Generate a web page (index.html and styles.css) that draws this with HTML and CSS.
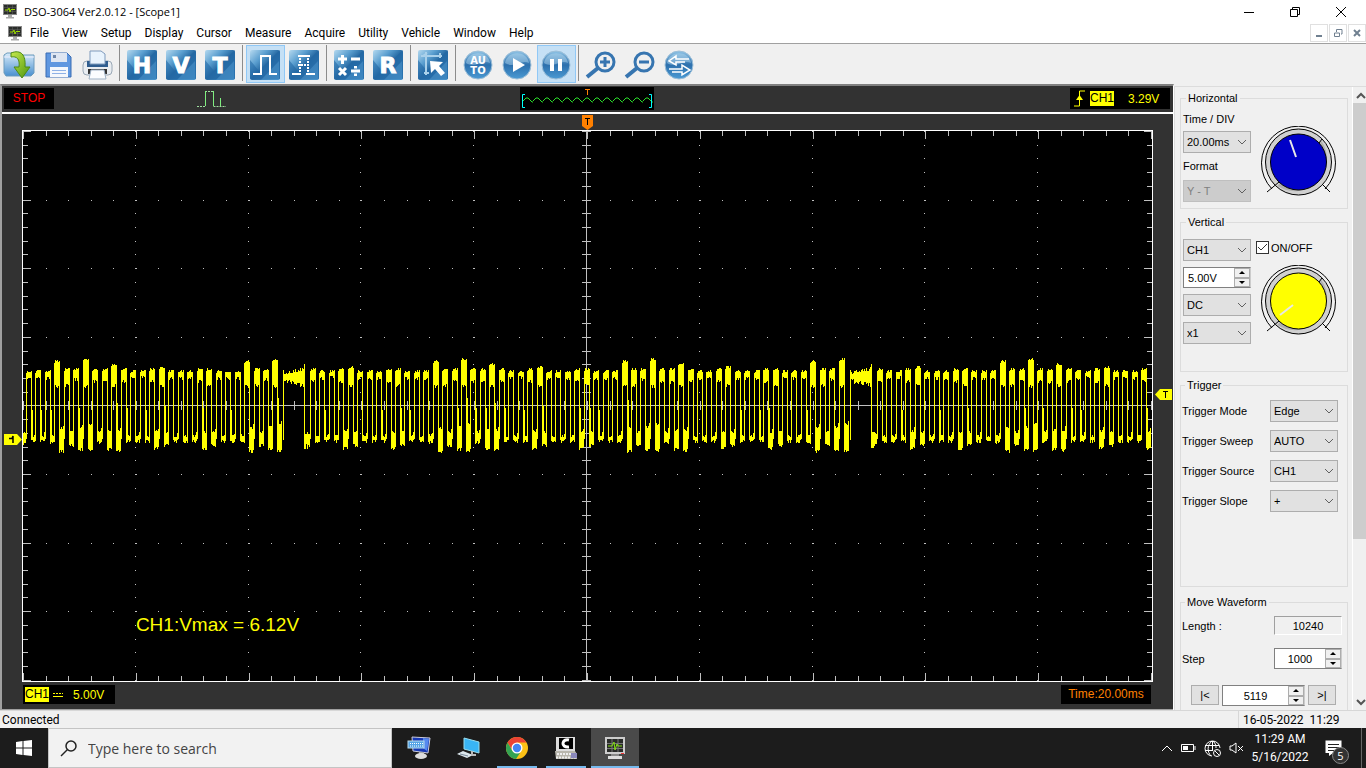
FILE: index.html
```html
<!DOCTYPE html>
<html lang="en">
<head>
    <meta charset="UTF-8">
    <meta name="viewport" content="width=device-width, initial-scale=1.0">
    <title>DSO-3064 Ver2.0.12 - [Scope1]</title>
    <link rel="stylesheet" href="styles.css">
</head>
<body>
    <!-- Shared gradients and icons -->
    <svg class="defs" aria-hidden="true">
        <defs>
            <linearGradient id="blue" x1="0" y1="0" x2="1" y2="1">
                <stop offset="0" stop-color="#b5d9ef"/>
                <stop offset="0.3" stop-color="#5b9fd0"/>
                <stop offset="0.5" stop-color="#2a6da6"/>
                <stop offset="1" stop-color="#3f8cc6"/>
            </linearGradient>
            <linearGradient id="blueDown" x1="0" y1="0" x2="0" y2="1">
                <stop offset="0" stop-color="#8fc4e6"/>
                <stop offset="0.5" stop-color="#2d70ad"/>
                <stop offset="1" stop-color="#4b9ad3"/>
            </linearGradient>
            <linearGradient id="folder" x1="0" y1="0" x2="0" y2="1">
                <stop offset="0" stop-color="#d9ecfa"/>
                <stop offset="1" stop-color="#4a90cf"/>
            </linearGradient>
            <linearGradient id="green" x1="0" y1="0" x2="1" y2="1">
                <stop offset="0" stop-color="#c6e94c"/>
                <stop offset="1" stop-color="#4d9610"/>
            </linearGradient>
        </defs>
        <symbol id="tile" viewBox="0 0 32 32">
            <rect x="1" y="1" width="30" height="30" rx="2" fill="url(#blue)"/>
            <path d="M1 11 L10 22 L31 1 V30 H1 Z" fill="#1f65a2" opacity="0.55"/>
            <path d="M12 31 L30 12 V31 Z" fill="#5aa3d8" opacity="0.4"/>
        </symbol>
        <symbol id="ball" viewBox="0 0 32 32">
            <circle cx="16" cy="16" r="14" fill="url(#blueDown)" stroke="#9dbfd8"/>
            <path d="M4 14 C6 1 26 1 28 14 C20 10 14 20 4 14 Z" fill="#b5daf0" opacity="0.45"/>
        </symbol>
        <symbol id="monitor" viewBox="0 0 14 15">
            <rect x="0.5" y="0.5" width="13" height="10" fill="#2b2e2b" stroke="#888"/>
            <path d="M1 3.5 H13 M1 7.5 H13 M4.5 1 V10 M9.5 1 V10" stroke="#626262" stroke-width="0.5"/>
            <path d="M2 6 H5 L6 4 L7 8 L8 5.5 H12" fill="none" stroke="#9ddb00"/>
            <path d="M5 11 H9 V13 H11 V14.500 H3 V13 H5 Z" fill="#aaa"/>
        </symbol>
    </svg>

    <header class="titlebar">
        <svg class="app-icon"><use href="#monitor"/></svg>
        <h1>DSO-3064 Ver2.0.12 - [Scope1]</h1>
        <div class="window-buttons">
            <button aria-label="Minimize"><svg width="12" height="12" viewBox="0 0 12 12"><path d="M1 6.500 H11"/></svg></button>
            <button aria-label="Restore"><svg width="12" height="12" viewBox="0 0 12 12"><path d="M1.500 3.500 H8.500 V10.500 H1.500 Z M3.500 3 V1.500 H10.500 V8.500 H9"/></svg></button>
            <button aria-label="Close"><svg width="12" height="12" viewBox="0 0 12 12"><path d="M1 1 L11 11 M11 1 L1 11"/></svg></button>
        </div>
    </header>

    <nav class="menubar">
        <svg class="app-icon"><use href="#monitor"/></svg>
        <button>File</button>
        <button>View</button>
        <button>Setup</button>
        <button>Display</button>
        <button>Cursor</button>
        <button>Measure</button>
        <button>Acquire</button>
        <button>Utility</button>
        <button>Vehicle</button>
        <button>Window</button>
        <button>Help</button>
        <div class="child-buttons">
            <button aria-label="Minimize child"><svg width="10" height="10" viewBox="0 0 10 10"><path d="M2 8 H8"/></svg></button>
            <button aria-label="Restore child"><svg width="10" height="10" viewBox="0 0 10 10"><path d="M1.500 5 H6.500 V8.500 H1.500 Z M3.500 4 V1.500 H9 V6 H8" class="thin"/></svg></button>
            <button aria-label="Close child"><svg width="10" height="10" viewBox="0 0 10 10"><path d="M2 2 L8 8 M8 2 L2 8"/></svg></button>
        </div>
    </nav>

    <div class="toolbar">
        <button aria-label="Open">
            <svg viewBox="0 0 32 32"><path d="M1 6 L4 4 H12 L14 6 H31 V24 L28 27 H3 L1 24 Z" fill="url(#folder)" stroke="#6d9bbd"/><path d="M1 8 H31" stroke="#eef"/><path d="M8 4 C18 0 23 6 22 18 H27 L19 29 L11 18 H16 C17 10 14 7 8 8 Z" fill="url(#green)" stroke="#4c8a14"/></svg>
        </button>
        <button aria-label="Save">
            <svg viewBox="0 0 32 32"><path d="M4 4 H25 L29 8 V28 H4 Z" fill="#5f97e0" stroke="#3b6cb3"/><rect x="9" y="4" width="16" height="9" fill="#dfe6f2"/><rect x="11" y="6" width="3" height="3" fill="#7087a8"/><rect x="8" y="18" width="18" height="10" fill="#f4f7fc"/><path d="M10 21.500 H24 M10 24.500 H24" stroke="#8eb1e6"/></svg>
        </button>
        <button aria-label="Print">
            <svg viewBox="0 0 32 32"><rect x="2" y="12" width="29" height="14" rx="4" fill="#e9edf1" stroke="#9aa8b6"/><path d="M6 12 H27 V18 H6 Z" fill="#2f5d8f"/><path d="M9 2 H20 L24 5 V15 H9 Z" fill="#e8f3fd" stroke="#7f9bbd"/><path d="M7 20 H26 V25 H7 Z" fill="#333"/><path d="M10 21 H23 L25 30 H8 Z" fill="#fbfdff" stroke="#9fb2c6"/></svg>
        </button>
        <span class="separator"></span>
        <button aria-label="Horizontal"><svg viewBox="0 0 32 32"><use href="#tile"/><text x="16" y="24" class="letter">H</text></svg></button>
        <button aria-label="Vertical"><svg viewBox="0 0 32 32"><use href="#tile"/><text x="16" y="24" class="letter">V</text></svg></button>
        <button aria-label="Trigger"><svg viewBox="0 0 32 32"><use href="#tile"/><text x="16" y="24" class="letter">T</text></svg></button>
        <span class="separator"></span>
        <button class="checked" aria-label="Pulse"><svg viewBox="0 0 32 32"><use href="#tile"/><path class="line" d="M4 25 H12 V7 H21 V25 H28"/></svg></button>
        <button aria-label="Average"><svg viewBox="0 0 32 32"><use href="#tile"/><path class="line" d="M4 25 H13 M18 25 H27 M10 7 H22"/><path class="line dashed" d="M12 9 V24 M20 9 V24 M10 16 H22"/></svg></button>
        <span class="separator"></span>
        <button aria-label="Math"><svg viewBox="0 0 32 32"><use href="#tile"/><path class="line bold" d="M5 10 H14 M9.500 6 V15 M18 10 H27 M6 19 L13 26 M13 19 L6 26 M18 22 H27 M22.500 17 V19.500 M22.500 24.500 V27"/></svg></button>
        <button aria-label="Reference"><svg viewBox="0 0 32 32"><use href="#tile"/><text x="16" y="24" class="letter">R</text></svg></button>
        <span class="separator"></span>
        <button aria-label="Cursor"><svg viewBox="0 0 32 32"><use href="#tile"/><path d="M4 7 H25 M9 3 V26 M6 7 L10 4 M23 4 V9 M7 24 H12" fill="none" stroke="#a9d0ea" stroke-width="2"/><path d="M13 12 L26 13 L22 17 L28 24 L24 27 L18 20 L14 24 Z" fill="#fff"/></svg></button>
        <span class="separator"></span>
        <button aria-label="Auto set"><svg viewBox="0 0 32 32"><use href="#ball"/><text x="16" y="15" class="auto">AU</text><text x="16" y="25" class="auto">TO</text></svg></button>
        <button aria-label="Start"><svg viewBox="0 0 32 32"><use href="#ball"/><path d="M12 9 L24 16 L12 23 Z" fill="#fff"/></svg></button>
        <button class="checked" aria-label="Stop"><svg viewBox="0 0 32 32"><use href="#ball"/><path d="M10 10 H14 V22 H10 Z M18 10 H22 V22 H18 Z" fill="#fff"/></svg></button>
        <span class="separator"></span>
        <button aria-label="Zoom in"><svg viewBox="0 0 32 32" class="lens"><path d="M2 28 L13 19" class="handle"/><circle cx="20" cy="13" r="9"/><path d="M15 13 H25 M20 8 V18"/></svg></button>
        <button aria-label="Zoom out"><svg viewBox="0 0 32 32" class="lens"><path d="M2 28 L13 19" class="handle"/><circle cx="20" cy="13" r="9"/><path d="M15 13 H25"/></svg></button>
        <button aria-label="Refresh"><svg viewBox="0 0 32 32"><use href="#ball"/><path d="M26 10 H13 V7 L6 12 L13 16 V13 H22 M6 20 H19 V16 L27 21 L19 26 V23 H9" fill="none" stroke="#fff" stroke-width="1.500"/></svg></button>
    </div>

    <main class="workspace">
        <section class="scope">
            <div class="scope-top">
                <div class="scope-state">
                    <span class="stop">STOP</span>
                    <svg width="30" height="18" viewBox="0 0 30 18"><path d="M0 16.500 H8.500 M8 1.500 H17 M16.500 16.500 H29" fill="none" stroke="#9fdf9f" stroke-dasharray="2 1"/><path d="M8.500 16 V1 M16.500 1 V16 M23.500 16 V8" stroke="#7fef7f"/></svg>
                </div>
                <svg class="preview" width="134" height="23" viewBox="0 0 134 23">
                    <rect width="134" height="23"/>
                    <path id="previewWave" fill="none" stroke="#2be02b"/>
                    <path d="M5 7.500 H2.500 V20.500 H5 M129 7.500 H131.500 V20.500 H129" fill="none" stroke="#0ff"/>
                    <path d="M65 2.500 H70 M67.500 2 V8" stroke="#ff8000"/>
                </svg>
                <div class="trigger-info">
                    <svg width="11" height="17" viewBox="0 0 11 17"><path d="M0 16 H5.500 V1 H11" fill="none" stroke="#ff0"/><path d="M5.500 5 L9 10 H2 Z" fill="#ff0"/></svg>
                    <span class="channel">CH1</span>
                    <span>3.29V</span>
                </div>
            </div>
            <div class="scope-screen">
                <div class="top-marker">
                    <svg width="11" height="15" viewBox="0 0 11 15"><path d="M0 0 H11 V11 L5.500 15 L0 11 Z" fill="#ff8000"/><path d="M3 3.500 H8 M5.500 3 V10" stroke="#000"/></svg>
                </div>
                <div class="plot-row">
                    <div class="gutter">
                        <svg class="marker channel-marker" width="18" height="11" viewBox="0 0 18 11"><path d="M0 0 H13 L18 5.500 L13 11 H0 Z" fill="#ff0"/><path d="M5 4.500 H8 L9 2 V9" fill="none" stroke="#000" stroke-width="1.500"/></svg>
                    </div>
                    <div class="plot">
                        <svg id="plot" viewBox="0 0 1129 550" preserveAspectRatio="none">
                            <path id="dots"/>
                            <path id="ticks"/>
                            <path id="wave"/>
                        </svg>
                        <span class="readout">CH1:Vmax = 6.12V</span>
                    </div>
                    <div class="gutter">
                        <svg class="marker level-marker" width="17" height="11" viewBox="0 0 17 11"><path d="M17 0 H5 L0 5.500 L5 11 H17 Z" fill="#ff0"/><path d="M8 2.500 H13 M10.500 2 V9" stroke="#000"/></svg>
                    </div>
                </div>
                <div class="scope-bottom">
                    <div class="channel-info">
                        <span class="channel">CH1</span>
                        <svg width="10" height="6" viewBox="0 0 10 6"><path d="M0 4.500 H10" stroke="#ff0"/><path d="M0 1.500 H10" stroke="#ff0" stroke-dasharray="2 1"/></svg>
                        <span>5.00V</span>
                    </div>
                    <div class="time-info">Time:20.00ms</div>
                </div>
            </div>
        </section>

        <aside class="panel">
            <form class="panel-content">
                <fieldset class="horizontal">
                    <legend>Horizontal</legend>
                    <div class="column">
                        <label for="timeDiv">Time / DIV</label>
                        <select id="timeDiv"><option>20.00ms</option></select>
                        <label for="format">Format</label>
                        <select id="format" disabled><option>Y - T</option></select>
                    </div>
                    <svg class="knob" viewBox="0 0 76 72">
                        <path class="ring" d="M11 63 A37 37 0 1 1 64 63"/>
                        <circle class="rim" cx="37.500" cy="36" r="33"/>
                        <path class="shade" d="M58 16 A29.500 29.500 0 0 1 18 58"/>
                        <circle cx="37.500" cy="36" r="28" fill="#0000c8"/>
                        <path class="pointer" d="M29 14 L35 31"/>
                        <path class="mark" d="M6 66 L18 56 M58 17 L61 13 M62 59 L69 66"/>
                    </svg>
                </fieldset>

                <fieldset class="vertical">
                    <legend>Vertical</legend>
                    <div class="column">
                        <select aria-label="Channel"><option>CH1</option></select>
                        <div class="spin">
                            <input type="text" value="5.00V" aria-label="Volts per division">
                            <button type="button" class="up" aria-label="Increase volts"></button>
                            <button type="button" class="down" aria-label="Decrease volts"></button>
                        </div>
                        <select aria-label="Coupling"><option>DC</option></select>
                        <select aria-label="Probe"><option>x1</option></select>
                    </div>
                    <div class="column knob-column">
                        <label class="check"><input type="checkbox" checked>ON/OFF</label>
                        <svg class="knob" viewBox="0 0 76 72">
                            <path class="ring" d="M11 63 A37 37 0 1 1 64 63"/>
                            <circle class="rim" cx="37.500" cy="36" r="33"/>
                            <path class="shade" d="M58 16 A29.500 29.500 0 0 1 18 58"/>
                            <circle cx="37.500" cy="36" r="28" fill="#ff0"/>
                            <path class="pointer" d="M19 50 L32 40"/>
                            <path class="mark" d="M6 66 L18 56 M58 17 L61 13 M62 59 L69 66"/>
                        </svg>
                    </div>
                </fieldset>

                <fieldset class="trigger">
                    <legend>Trigger</legend>
                    <div class="row"><label for="mode">Trigger Mode</label><select id="mode"><option>Edge</option></select></div>
                    <div class="row"><label for="sweep">Trigger Sweep</label><select id="sweep"><option>AUTO</option></select></div>
                    <div class="row"><label for="source">Trigger Source</label><select id="source"><option>CH1</option></select></div>
                    <div class="row"><label for="slope">Trigger Slope</label><select id="slope"><option>+</option></select></div>
                </fieldset>

                <fieldset class="move">
                    <legend>Move Waveform</legend>
                    <div class="row"><label for="length">Length :</label><input id="length" class="length" type="text" value="10240" readonly></div>
                    <div class="row">
                        <label for="step">Step</label>
                        <div class="spin centered">
                            <input id="step" type="text" value="1000">
                            <button type="button" class="up" aria-label="Increase step"></button>
                            <button type="button" class="down" aria-label="Decrease step"></button>
                        </div>
                    </div>
                    <div class="position">
                        <button type="button" class="jump">|&lt;</button>
                        <div class="spin centered wide">
                            <input type="text" value="5119" aria-label="Position">
                            <button type="button" class="up" aria-label="Increase position"></button>
                            <button type="button" class="down" aria-label="Decrease position"></button>
                        </div>
                        <button type="button" class="jump">&gt;|</button>
                    </div>
                </fieldset>
            </form>
            <div class="scrollbar">
                <svg width="10" height="16" viewBox="0 0 10 16"><path d="M1 11 L5 7 L9 11"/></svg>
                <span class="thumb"></span>
                <svg width="10" height="16" viewBox="0 0 10 16"><path d="M1 6 L5 10 L9 6"/></svg>
            </div>
        </aside>
    </main>

    <div class="statusbar">
        <span>Connected</span>
        <span class="status-date">16-05-2022&nbsp; 11:29</span>
    </div>

    <footer class="taskbar">
        <button class="start" aria-label="Start menu"><svg width="16" height="16" viewBox="0 0 16 16"><path d="M0 2 L6.500 1 V7.500 H0 Z M7.500 1 L16 0 V7.500 H7.500 Z M0 8.500 H6.500 V15 L0 14 Z M7.500 8.500 H16 V16 L7.500 15 Z" fill="#fff"/></svg></button>
        <label class="search">
            <svg width="18" height="18" viewBox="0 0 18 18"><circle cx="11" cy="7" r="5" fill="none" stroke="#222" stroke-width="1.500"/><path d="M7.500 10.500 L1 17" stroke="#222" stroke-width="1.500"/></svg>
            <input type="text" placeholder="Type here to search" aria-label="Search">
        </label>
        <button class="app" aria-label="Remote keyboard">
            <svg width="24" height="24" viewBox="0 0 24 24"><path d="M5 1 L23 2 L21 17 L6 15 Z" fill="#1739b5" stroke="#ccd"/><path d="M16 2 L22 3 L20 15 L16 12 Z" fill="#5588ee"/><rect x="1" y="5" width="16" height="7" fill="#55a4e6" stroke="#bde"/><path d="M3 7.500 H16 M3 10 H16" stroke="#fff" stroke-dasharray="1 1"/><path d="M12 16 H17 V20 H12 Z" fill="#aaa"/><ellipse cx="14" cy="20" rx="6" ry="3" fill="#ddd"/></svg>
        </button>
        <button class="app" aria-label="This PC">
            <svg width="24" height="24" viewBox="0 0 24 24"><path d="M8 2 L23 6 V17 L8 13 Z" fill="#39b5f5" stroke="#9de"/><path d="M1 18 L7 15 L17 19 L11 22 Z" fill="#dce7ed"/><path d="M16 15 V19 H20" stroke="#bbb" stroke-width="2" fill="none"/><path d="M4 18 L12 20" stroke="#789"/></svg>
        </button>
        <button class="app open" aria-label="Chrome">
            <svg width="24" height="24" viewBox="0 0 24 24"><circle cx="12" cy="12" r="11" fill="#fbc116"/><path d="M2.500 6.500 A11 11 0 0 1 21.500 6.500 H12 L7.500 14.500 Z" fill="#ea4335"/><path d="M2.500 6.500 L7.500 15 L12 17 H15 L11 23 A11 11 0 0 1 2.500 6.500 Z" fill="#34a353"/><circle cx="12" cy="12" r="5.500" fill="#fff"/><circle cx="12" cy="12" r="4.200" fill="#4285f4"/></svg>
        </button>
        <button class="app open" aria-label="Terminal">
            <svg width="24" height="24" viewBox="0 0 24 24"><rect x="2" y="1" width="19" height="14" fill="#ddd"/><rect x="5" y="2" width="14" height="11" fill="#000"/><path d="M15 4 C8 2 6 12 15 11" fill="none" stroke="#fff" stroke-width="3"/><path d="M1 15 H21 L23 18 V23 H2 Z" fill="#b9b7ad"/><path d="M2 21.500 H23 M3 18 H18" stroke="#eee" stroke-width="2" stroke-dasharray="2 1"/><path d="M17 17 H23 V22 H17 Z" fill="#8a88bb"/></svg>
        </button>
        <button class="app open active" aria-label="DSO-3064">
            <svg width="24" height="24" viewBox="0 0 24 24"><rect x="2" y="1" width="20" height="17" fill="#ccc"/><rect x="4" y="3" width="16" height="13" fill="#292b29"/><path d="M4 7.500 H20 M4 12.500 H20 M9 3 V16 M15 3 V16" stroke="#777"/><path d="M5 10 H9 L11 6 L12 14 L14 8 L15 10 H19" fill="none" stroke="#82df13"/><rect x="8" y="18" width="8" height="2" fill="#888"/><rect x="5" y="20" width="14" height="3" fill="#ddd"/><rect x="18" y="17" width="3" height="1" fill="#e33"/></svg>
        </button>
        <div class="tray">
            <svg width="12" height="10" viewBox="0 0 12 10"><path d="M1 8 L6 3 L11 8"/></svg>
            <svg width="15" height="10" viewBox="0 0 15 10"><path d="M0.500 1.500 H12.500 V8.500 H0.500 Z M14 3 V7"/><rect x="2" y="3" width="5" height="4" fill="#fff" stroke="none"/></svg>
            <svg width="17" height="17" viewBox="0 0 17 17"><path d="M16 8 A7.500 7.500 0 1 0 8 16 M1 5.500 H15 M1 10.500 H9 M8.500 1 V10 M8 1 C3 5 3 12 7 16 M9 1 C12 4 12 6 12 8"/><circle cx="13" cy="13" r="3.500"/><path d="M11 11 L15 15"/></svg>
            <svg width="15" height="14" viewBox="0 0 15 14"><path d="M1 5 H3 L7 2 V12 L3 9 H1 Z M9 5 L14 10 M14 5 L9 10"/></svg>
            <div class="clock"><span>11:29 AM</span><span>5/16/2022</span></div>
            <button class="notice" aria-label="Notifications">
                <svg width="18" height="17" viewBox="0 0 18 17"><path d="M0.500 0.500 H16.500 V13 H8 L4 16 V13 H0.500 Z" fill="#fff"/><path d="M3 4.500 H14 M3 7.500 H14 M3 10.500 H10" stroke="#222"/></svg>
                <span class="badge">5</span>
            </button>
        </div>
    </footer>

    <script src="scope.js"></script>
</body>
</html>
```
FILE: styles.css
```css
* {
    box-sizing: border-box;
}

body {
    margin: 0;
    height: 100vh;
    display: flex;
    flex-direction: column;
    background: #f0f0f0;
    color: #000;
    font-family: "Liberation Sans", Arial, sans-serif;
    font-size: 11px;
    overflow: hidden;
}

button, input, select {
    font: inherit;
    color: inherit;
}

button {
    display: flex;
    align-items: center;
    justify-content: center;
    padding: 0;
    border: none;
    background: none;
}

svg {
    flex: none;
}

.defs {
    position: absolute;
    width: 0;
    height: 0;
}

/* Title and menu */
.titlebar, .menubar {
    display: flex;
    align-items: center;
    background: #fff;
    font-family: Roboto, sans-serif;
    font-size: 12px;
}

.titlebar {
    height: 23px;
    padding-left: 3px;
}

.titlebar h1 {
    margin: 0 0 0 7px;
    font-family: "Open Sans", sans-serif;
    font-size: 11px;
    font-weight: normal;
}

.app-icon {
    width: 14px;
    height: 15px;
}

.window-buttons {
    display: flex;
    margin-left: auto;
    margin-right: 2px;
}

.window-buttons button {
    width: 46px;
    height: 20px;
}

.window-buttons path, .child-buttons path {
    fill: none;
    stroke: #000;
}

.menubar {
    height: 20px;
    padding-left: 8px;
}

.menubar > button {
    padding: 0 6px 0 7px;
}

.menubar .app-icon {
    margin-right: 1px;
}

.child-buttons {
    display: flex;
    gap: 1px;
    margin-left: auto;
}

.child-buttons button {
    width: 18px;
    height: 18px;
    border: 1px solid #e0e0e0;
}

.child-buttons path {
    stroke: #708090;
    stroke-width: 2;
}

.child-buttons .thin {
    stroke-width: 1;
}

/* Toolbar */
.toolbar {
    display: flex;
    height: 41px;
    padding-top: 1px;
    border-top: 1px solid #a0a0a0;
    flex: none;
}

.toolbar button {
    width: 39px;
    height: 38px;
    padding: 2px 1px 0 0;
}

.toolbar button.checked {
    background: #c5e0f5;
    border: 1px solid #90c8f6;
}

.toolbar svg {
    width: 32px;
    height: 32px;
}

.separator {
    width: 6px;
    height: 36px;
    border-right: 3px solid transparent;
    background: linear-gradient(to right, transparent 2px, #8c8c8c 2px);
    background-clip: padding-box;
}

.letter, .auto {
    fill: #fff;
    font-family: "DejaVu Sans", sans-serif;
    font-weight: bold;
    text-anchor: middle;
}

.letter {
    font-size: 22px;
    stroke: #fff;
}

.auto {
    font-size: 10px;
}

.line {
    fill: none;
    stroke: #fff;
    stroke-width: 2;
}

.bold {
    stroke-width: 3;
}

.dashed {
    stroke-dasharray: 2 1;
}

.lens path, .lens circle {
    fill: none;
    stroke: #3775b0;
    stroke-width: 3;
}

.lens .handle {
    stroke-width: 4;
}

/* Scope */
.workspace {
    display: flex;
    flex: 1;
    min-height: 0;
}

.scope {
    display: flex;
    flex-direction: column;
    flex: 1;
    min-width: 0;
    border-left: 2px solid #a0a0a0;
    border-top: 2px solid #808080;
    border-right: 1px solid #fff;
    background: #323232;
}

.scope-top {
    display: grid;
    grid-template-columns: 1fr auto 1fr;
    align-items: center;
    height: 28px;
    padding: 0 3px 1px 2px;
    border-bottom: 2px solid #fff;
}

.scope-state {
    display: flex;
    align-items: center;
    gap: 143px;
}

.stop {
    width: 50px;
    background: #000;
    color: #f00;
    line-height: 21px;
    text-align: center;
}

.trigger-info, .channel-info {
    display: flex;
    align-items: center;
    background: #000;
    color: #ff0;
}

.trigger-info {
    justify-self: end;
    width: 100px;
    height: 21px;
    padding-left: 4px;
    gap: 5px;
}

.channel {
    background: #ff0;
    color: #000;
    line-height: 15px;
}

.trigger-info .channel {
    margin-right: 9px;
}

.scope-screen {
    display: flex;
    flex-direction: column;
    flex: 1;
    min-height: 0;
    padding-bottom: 5px;
    border-bottom: 1px solid #a0a0a0;
}

.top-marker {
    display: flex;
    justify-content: center;
    align-items: end;
    height: 16px;
}

.plot-row {
    display: flex;
    flex: 1;
    min-height: 0;
}

.gutter {
    position: relative;
    width: 20px;
}

.marker {
    position: absolute;
}

.channel-marker {
    left: 2px;
    top: 55%;
}

.level-marker {
    right: 1px;
    top: 47%;
}

.plot {
    position: relative;
    flex: 1;
    border: 1px solid #fff;
    background: #000;
}

#plot {
    display: block;
    width: 100%;
    height: 100%;
    shape-rendering: crispEdges;
}

#plot path {
    fill: none;
    stroke: #c0c0c0;
}

#plot #wave {
    stroke: #ff0;
}

.readout {
    position: absolute;
    left: 10%;
    bottom: 8%;
    color: #ff0;
    font-size: 19px;
    line-height: 24px;
}

.scope-bottom {
    display: flex;
    justify-content: space-between;
    padding: 3px 22px 0 21px;
}

.channel-info {
    width: 92px;
    height: 19px;
    padding-left: 2px;
    gap: 4px;
}

.channel-info span:last-child {
    margin-left: 6px;
}

.time-info {
    width: 90px;
    background: #000;
    color: #ff8000;
    font-size: 12px;
    line-height: 19px;
    text-align: center;
}

.stop, .trigger-info, .channel-info {
    font-size: 12px;
}

/* Control panel */
.panel {
    display: flex;
    width: 192px;
    margin-top: 2px;
    border-top: 1px solid #dcdcdc;
    border-left: 1px solid #dcdcdc;
    overflow: hidden;
}

.panel-content {
    flex: 1;
    display: flex;
    flex-direction: column;
    gap: 7px;
    padding: 5px 4px 0 5px;
    overflow: hidden;
}

fieldset {
    display: flex;
    flex: none;
    margin: 0;
    padding: 0 9px 0 2px;
    border: 1px solid #dcdcdc;
    min-width: 0;
}

legend {
    margin-left: 3px;
    padding: 0 2px;
    line-height: 12px;
}

.horizontal {
    height: 117px;
}

.vertical {
    height: 156px;
}

.trigger {
    flex-direction: column;
    height: 208px;
    padding: 5px 9px 0 1px;
}

.move {
    flex-direction: column;
    margin-top: 2px;
    padding: 1px 9px 10px 1px;
}

.column {
    display: flex;
    flex-direction: column;
    width: 68px;
}

.horizontal .column {
    padding-top: 6px;
}

.horizontal label {
    height: 21px;
    line-height: 18px;
}

.horizontal select {
    margin-bottom: 4px;
}

.horizontal select + label {
    height: 23px;
}

.vertical .column {
    gap: 6px;
    padding-top: 11px;
}

.vertical .knob-column {
    width: auto;
    gap: 0;
    padding-top: 12px;
    margin-left: 5px;
}

select {
    appearance: none;
    width: 68px;
    height: 22px;
    padding: 0 3px;
    border: 1px solid #adadad;
    border-radius: 0;
    background: #e1e1e1 url("data:image/svg+xml,%3Csvg xmlns='http://www.w3.org/2000/svg' width='10' height='6'%3E%3Cpath d='M1 1L5 5L9 1' fill='none' stroke='%23606060'/%3E%3C/svg%3E") no-repeat right 3px center;
}

select:disabled {
    background-color: #ccc;
    border-color: #bfbfbf;
    color: #808080;
    opacity: 1;
}

.knob {
    width: 76px;
    height: 72px;
}

.horizontal .knob {
    margin: 22px 0 0 10px;
}

.vertical .knob {
    margin: 10px 0 0 5px;
}

.ring {
    fill: none;
    stroke: #000;
}

.rim {
    fill: #d0d0d0;
    stroke: #000;
}

.shade {
    fill: none;
    stroke: #b0b0b0;
    stroke-width: 5;
}

.knob circle {
    stroke: #000;
}

.pointer {
    stroke: #e8e8e8;
    stroke-width: 2;
}

.mark {
    stroke: #000;
    stroke-width: 1;
}

.check {
    display: flex;
    align-items: center;
    height: 15px;
    gap: 2px;
}

.check input {
    appearance: none;
    width: 13px;
    height: 13px;
    margin: 0;
    border: 1px solid #333;
    background: #fff url("data:image/svg+xml,%3Csvg xmlns='http://www.w3.org/2000/svg' width='11' height='11'%3E%3Cpath d='M1 5L4 8L10 2' fill='none' stroke='%23333'/%3E%3C/svg%3E") no-repeat center;
}

.spin {
    display: grid;
    grid-template-columns: 1fr 16px;
    grid-template-rows: 1fr 1fr;
    width: 68px;
    height: 21px;
    border: 1px solid #808080;
    border-right-color: #ccc;
    background: #f0f0f0;
}

.spin input {
    grid-row: 1 / 3;
    min-width: 0;
    padding: 0 4px;
    border: none;
    background: #fff;
}

.spin button {
    border: 1px solid #adadad;
}

.spin button::before {
    content: "";
    border: 3px solid transparent;
}

.spin .up::before {
    border-top: none;
    border-bottom-color: #000;
}

.spin .down::before {
    border-bottom: none;
    border-top-color: #000;
}

.centered input {
    text-align: center;
}

.row {
    display: flex;
    justify-content: space-between;
    align-items: center;
}

.trigger .row {
    height: 30px;
}

.move .row {
    height: 33px;
    margin-right: -4px;
}

.length {
    width: 68px;
    height: 19px;
    border: 1px solid #a0a0a0;
    border-right-color: #fff;
    border-bottom-color: #fff;
    background: #f0f0f0;
    text-align: center;
}

.position {
    display: flex;
    gap: 3px;
    padding: 10px 0 0 9px;
}

.jump {
    width: 28px;
    height: 20px;
    border: 1px solid #adadad;
    background: #e1e1e1;
}

.wide {
    width: 83px;
}

.scrollbar {
    display: flex;
    flex-direction: column;
    align-items: end;
    width: 14px;
    border-left: 1px solid #fff;
}

.scrollbar path {
    fill: none;
    stroke: #555;
    stroke-width: 2;
}

.thumb {
    width: 13px;
    height: 70%;
    margin-bottom: auto;
    background: #cdcdcd;
}

/* Status bar */
.statusbar {
    display: flex;
    justify-content: space-between;
    height: 18px;
    flex: none;
    padding-left: 2px;
    border-top: 1px solid #d7d7d7;
    font-family: Roboto, sans-serif;
    font-size: 12px;
    line-height: 19px;
}

.status-date {
    width: 128px;
    padding-left: 4px;
    border-left: 1px solid #d7d7d7;
}

/* Taskbar */
.taskbar {
    display: flex;
    height: 40px;
    flex: none;
    background: #1c1c1c;
    color: #fff;
    font-family: "Open Sans", sans-serif;
}

.start {
    width: 48px;
}

.search {
    display: flex;
    align-items: center;
    width: 344px;
    padding-left: 11px;
    gap: 10px;
    margin-right: 3px;
    border: 1px solid #c4c4c4;
    background: #f2f2f2;
}

.search input {
    flex: 1;
    min-width: 0;
    padding: 0;
    border: none;
    background: none;
    font-size: 14px;
}

.search input::placeholder {
    color: #444;
}

.app {
    width: 48px;
    margin-right: 1px;
}

.open {
    background: linear-gradient(#76b9ed, #76b9ed) no-repeat center bottom / 40px 2px;
}

.active {
    background-color: #4a4a4a;
    background-size: 100% 2px;
}

.tray {
    display: flex;
    align-items: center;
    gap: 8px;
    margin-left: auto;
    margin-right: 4px;
    border-right: 1px solid #666;
}

.tray > svg path, .tray > svg circle {
    fill: none;
    stroke: #fff;
}

.clock {
    display: flex;
    flex-direction: column;
    align-items: center;
    width: 56px;
    font-family: Roboto, sans-serif;
    font-size: 12px;
    line-height: 18px;
}

.notice {
    position: relative;
    justify-content: start;
    width: 36px;
    height: 40px;
    margin-left: 9px;
}

.badge {
    position: absolute;
    left: 7px;
    bottom: 4px;
    width: 17px;
    border: 1px solid #888;
    border-radius: 9px;
    background: #333;
    font-size: 11px;
    line-height: 15px;
    text-align: center;
}
```
FILE: scope.js
```js
var width = 1129;
var height = 550;
var divX = 112.8;
var divY = 68.6;
var seed = 7;

// Top and bottom extents of one repeating group of 20 pulses: [top, topEnd, bottom, bottomEnd]
var pulses = [
    [228, 254, 293, 319], [238, 249, 301, 311], [238, 250, 299, 318], [233, 253, 299, 319],
    [238, 249, 305, 310], [240, 246, 305, 310], [240, 245, 305, 310], [238, 249, 300, 317],
    [236, 253, 301, 314], [240, 246, 305, 310], [240, 246, 305, 310], [240, 246, 305, 310],
    [238, 249, 301, 317], [238, 253, 301, 314], [240, 246, 305, 310], [240, 246, 305, 310],
    [240, 246, 304, 311], [230, 254, 297, 320], [238, 253, 301, 314], [238, 247, 296, 318]
];

// Small repeatable noise so the trace looks the same each time
function noise(n) {
    seed = (seed * 16807) % 2147483647;
    return seed % n;
}

function drawGrid() {
    var dots = "";
    var ticks = "M0 274.5H" + width + "M563.5 0V" + height;
    for (var i = 0; i <= 50; i++) {
        var x = Math.round(i * divX / 5) + 0.5;
        var long = i % 5 == 0 ? 8 : 5;
        ticks += "M" + x + " 0v" + long + "M" + x + " " + height + "v-" + long + "M" + x + " 270v9";
        for (var r = 1; r < 8; r++) {
            dots += "M" + (x - 0.5) + " " + (Math.round(r * divY) + 0.5) + "h1";
        }
    }
    for (var j = 0; j <= 40; j++) {
        var y = Math.round(j * divY / 5) + 0.5;
        var len = j % 5 == 0 ? 8 : 5;
        ticks += "M0 " + y + "h" + len + "M" + width + " " + y + "h-" + len + "M559 " + y + "h9";
        for (var c = 1; c < 10; c++) {
            dots += "M" + Math.round(c * divX - 1) + " " + y + "h1";
        }
    }
    document.getElementById("dots").setAttribute("d", dots);
    document.getElementById("ticks").setAttribute("d", ticks);
}

function column(x, top, bottom) {
    return "M" + (x + 0.5) + " " + (top - 1) + "V" + (bottom - 1);
}

function drawPulse(center, p) {
    var x = Math.round(center) - 3;
    var d = column(x, p[0] + 3, 309) + column(x + 5, p[0] + 3, 309);
    // Some edges fall across two samples
    if (noise(3) == 0) {
        d += column(x + 6, p[0] + 40, 309);
    }
    for (var i = 0; i < 6; i++) {
        var legs = i == 0 || i > 4 ? 4 : 0;
        d += column(x + i, p[0] + noise(3) + (i == 0 ? 2 : 0), p[1] + noise(4) + 1 + legs);
    }
    for (i = 5; i < 10; i++) {
        var rise = i == 5 || i == 9 ? 3 : 0;
        d += column(x + i, p[2] + noise(3) - rise, p[3] - noise(4) + 3);
    }
    return d;
}

function drawBurst(start) {
    var d = column(start, 240, 310);
    for (var i = 0; i < 22; i++) {
        d += column(start + i, 241 - Math.floor(i / 5) + noise(4), 249 + Math.floor(i / 4) + noise(5));
    }
    d += column(start + 21, 234, 312);
    for (i = 21; i < 27; i++) {
        d += column(start + i, 302 + noise(3), 314 + noise(6));
    }
    return d;
}

function drawWave() {
    var d = "";
    var k;
    for (k = 0; k < 3; k++) {
        d += column(k, 302 + noise(3), 312 + noise(4));
    }
    for (k = 0; k < 27; k++) {
        d += drawPulse(6 + k * 9.48, pulses[(k + 14) % 20]);
    }
    d += drawBurst(260);
    for (k = 0; k < 57; k++) {
        d += drawPulse(290 + k * 9.44, pulses[(k + 4) % 20]);
    }
    d += drawBurst(827);
    for (k = 0; k < 29; k++) {
        d += drawPulse(857 + k * 9.44, pulses[(k + 4) % 20]);
    }
    document.getElementById("wave").setAttribute("d", d);
}

function drawPreview() {
    var d = "M3 14";
    for (var x = 3; x < 128; x += 10) {
        d += "l3 -3h2l3 3l1 1h1";
        d += "M" + Math.min(x + 10, 130) + " 14";
    }
    document.getElementById("previewWave").setAttribute("d", d);
}

drawGrid();
drawWave();
drawPreview();
```
